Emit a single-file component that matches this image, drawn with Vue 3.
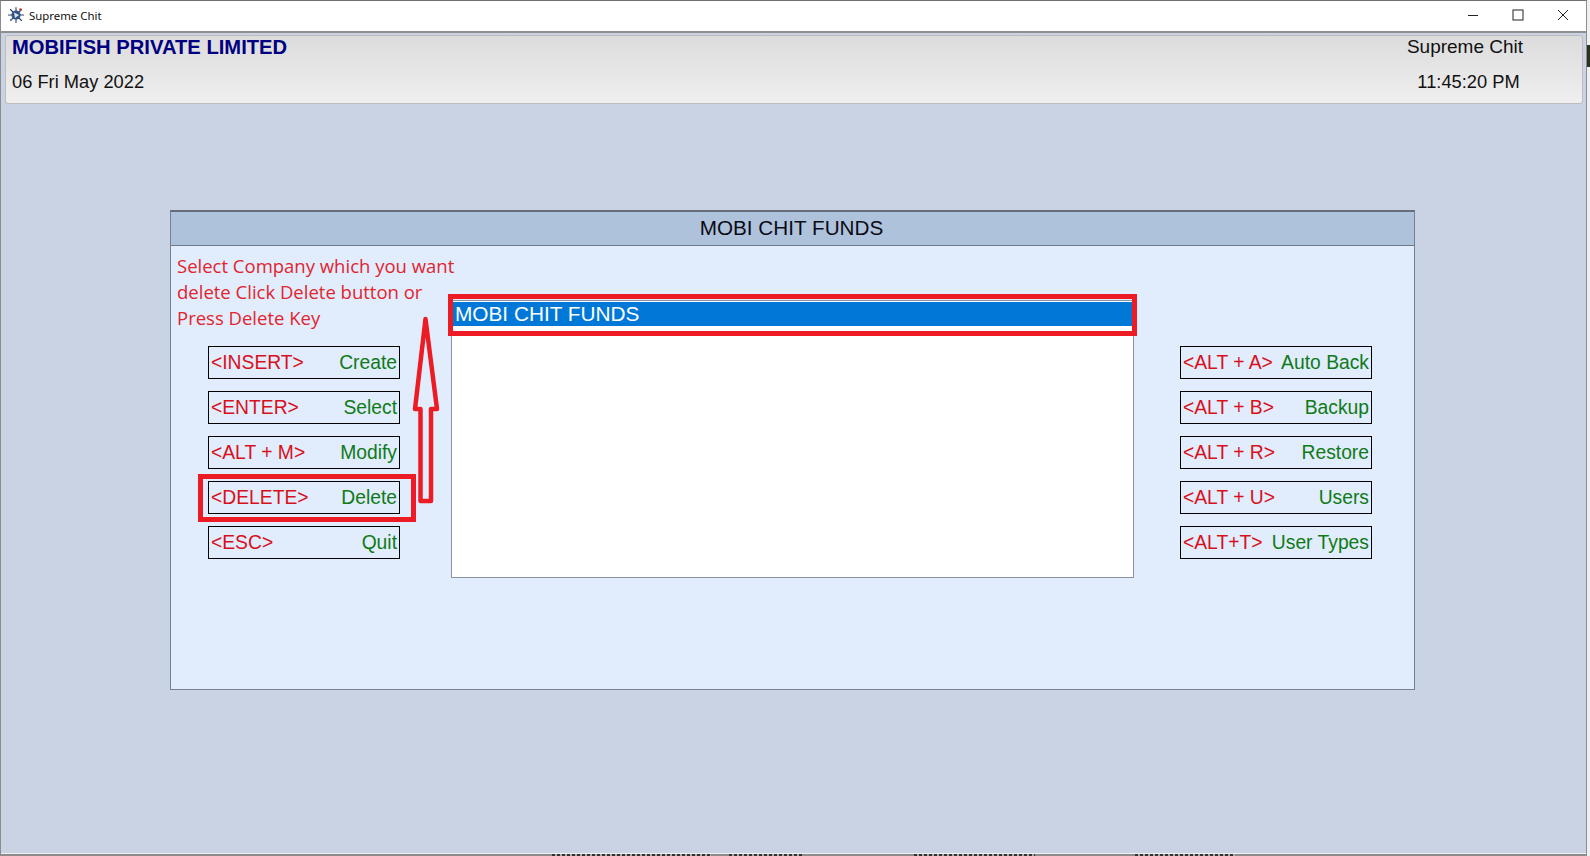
<script setup>
const leftKeys = [
  { key: '<INSERT>', label: 'Create' },
  { key: '<ENTER>', label: 'Select' },
  { key: '<ALT + M>', label: 'Modify' },
  { key: '<DELETE>', label: 'Delete', marked: true },
  { key: '<ESC>', label: 'Quit' },
]
const rightKeys = [
  { key: '<ALT + A>', label: 'Auto Back' },
  { key: '<ALT + B>', label: 'Backup' },
  { key: '<ALT + R>', label: 'Restore' },
  { key: '<ALT + U>', label: 'Users' },
  { key: '<ALT+T>', label: 'User Types' },
]
</script>

<template>
  <div class="page">
    <div class="window">
      <div class="titlebar">
        <svg class="app-icon" width="18" height="18" viewBox="0 0 18 18">
          <g stroke="#2b3f63" stroke-width="1.1" stroke-linecap="round">
            <path d="M9 1.5V16.5M1.5 9H16.5M3.5 3.5L14.5 14.5M14.5 3.5L3.5 14.5" />
          </g>
          <circle cx="9" cy="9" r="4.6" fill="#33528a" />
          <path d="M7 6.5L12 9L8 12Z" fill="#dfe6f2" />
          <circle cx="13.5" cy="3.5" r="1.3" fill="#c0392b" />
          <circle cx="4" cy="14" r="1.1" fill="#5b84c4" />
        </svg>
        <span class="app-name">Supreme Chit</span>
        <div class="controls">
          <span class="control">
            <svg width="12" height="12" viewBox="0 0 12 12"><path d="M1 6.5H11" stroke="#222" fill="none" /></svg>
          </span>
          <span class="control">
            <svg width="12" height="12" viewBox="0 0 12 12"><rect x="1" y="1" width="10" height="10" stroke="#222" fill="none" /></svg>
          </span>
          <span class="control">
            <svg width="12" height="12" viewBox="0 0 12 12"><path d="M1 1L11 11M11 1L1 11" stroke="#222" fill="none" /></svg>
          </span>
        </div>
      </div>

      <main class="main">
        <header class="topbar">
          <div class="topbar-left">
            <div class="company">MOBIFISH PRIVATE LIMITED</div>
            <div class="topbar-line">06 Fri May 2022</div>
          </div>
          <div class="topbar-right">
            <div class="product">Supreme Chit</div>
            <div class="topbar-line time">11:45:20 PM</div>
          </div>
        </header>

        <section class="panel">
          <div class="panel-title">MOBI CHIT FUNDS</div>
          <div class="panel-body">
            <div class="left-col">
              <p class="note">Select Company which you want<br />delete Click Delete button or<br />Press Delete Key</p>
              <div class="keys">
                <div v-for="item in leftKeys" :key="item.key" class="key-row">
                  <span class="key">{{ item.key }}</span>
                  <span class="label">{{ item.label }}</span>
                  <span v-if="item.marked" class="mark-delete"></span>
                </div>
              </div>
            </div>

            <div class="list">
              <div class="list-item">MOBI CHIT FUNDS</div>
              <span class="mark-list"></span>
            </div>

            <div class="keys right-col">
              <div v-for="item in rightKeys" :key="item.key" class="key-row">
                <span class="key">{{ item.key }}</span>
                <span class="label">{{ item.label }}</span>
              </div>
            </div>

            <svg class="arrow" width="32" height="190" viewBox="0 0 32 190">
              <path
                d="M15.5 4L5 94H10.5V186H21V94H27L15.5 4Z"
                fill="none"
                stroke="#ed1c24"
                stroke-width="4.5"
                stroke-linejoin="round"
              />
            </svg>
          </div>
        </section>
      </main>

      <div class="footer">
        <span class="scrap scrap-a"></span>
        <span class="scrap scrap-b"></span>
        <span class="scrap scrap-c"></span>
        <span class="scrap scrap-d"></span>
      </div>
    </div>
    <div class="edge"><span class="edge-dark"></span></div>
  </div>
</template>

<style>
html, body { margin: 0; background: #fff; overflow: hidden; }
</style>

<style scoped>
.page {
  display: flex;
  width: 1590px;
  height: 856px;
  overflow: hidden;
  font-family: "Liberation Sans", Arial, sans-serif;
}
.window {
  flex: 1;
  min-width: 0;
  display: flex;
  flex-direction: column;
  border-top: 1px solid #6f6f6f;
  border-right: 1px solid #8c8c8c;
  border-left: 1px solid #8c8c8c;
  background: #fff;
}
.titlebar {
  flex: none;
  box-sizing: border-box;
  height: 30px;
  display: flex;
  align-items: center;
  padding: 0 0 2px 6px;
}
.app-icon { flex: none; }
.app-name {
  margin-left: 4px;
  font: 11.4px "Noto Sans", "Open Sans", sans-serif;
  color: #111;
}
.controls { margin-left: auto; display: flex; padding-right: 1px; }
.control {
  width: 45px;
  height: 28px;
  display: flex;
  align-items: center;
  justify-content: center;
}
.main {
  flex: 1;
  min-height: 0;
  border-top: 2px solid #8f8f8f;
  padding: 2px 3px 0 4px;
  background: #c9d3e3;
}
.topbar {
  box-sizing: border-box;
  height: 69px;
  display: flex;
  justify-content: space-between;
  border: 1px solid #bdbdbd;
  border-radius: 3px;
  background: linear-gradient(#dcdcdc, #efefef);
  color: #111;
}
.topbar-left { padding-left: 6px; }
.topbar-right { width: 160px; margin-right: 36px; text-align: center; }
.company,
.product {
  height: 24px;
  line-height: 22px;
}
.company {
  font-size: 20.2px;
  font-weight: 700;
  color: #000080;
}
.product { font-size: 19px; padding-right: 2px; }
.topbar-line {
  margin-top: 10px;
  font-size: 18.3px;
  line-height: 24px;
}
.time { padding-left: 5px; }
.panel {
  box-sizing: border-box;
  width: 1245px;
  height: 480px;
  margin: 106px 0 0 165px;
  display: flex;
  flex-direction: column;
  border: 1px solid #76808f;
  border-top: 2px solid #666c78;
  background: #e1ecfc;
}
.panel-title {
  flex: none;
  height: 33px;
  line-height: 32px;
  padding-right: 2px;
  text-align: center;
  font-size: 20.7px;
  color: #0a0a14;
  background: #aec2dc;
  border-bottom: 1px solid #6d7a8c;
}
.panel-body {
  position: relative;
  flex: 1;
  display: flex;
  align-items: flex-start;
}
.left-col {
  flex: none;
  width: 260px;
  padding-left: 6px;
}
.note {
  margin: 7px 0 15px;
  font: 18.5px/26px "Open Sans", "Noto Sans", sans-serif;
  color: #e2242e;
  white-space: nowrap;
}
.keys {
  display: flex;
  flex-direction: column;
  gap: 12px;
}
.left-col .keys { margin-left: 31px; }
.right-col { flex: none; margin: 100px 0 0 46px; }
.key-row {
  position: relative;
  box-sizing: border-box;
  width: 192px;
  height: 33px;
  display: flex;
  align-items: center;
  justify-content: space-between;
  padding: 0 2px;
  border: 1px solid #000;
  font-size: 19.3px;
  white-space: nowrap;
}
.key { color: #d8101c; }
.label { color: #0f7a18; }
.list {
  position: relative;
  flex: none;
  box-sizing: border-box;
  width: 683px;
  height: 278px;
  margin: 54px 0 0 14px;
  padding-top: 1px;
  background: #fff;
  border: 1px solid #8a93a3;
}
.list-item {
  height: 24px;
  line-height: 24px;
  padding-left: 3px;
  font-size: 20.8px;
  color: #fff;
  background: #0078d7;
}
.mark-list,
.mark-delete {
  position: absolute;
  box-sizing: border-box;
  border: 5px solid #ed1c24;
}
.mark-list { left: -4px; right: -4px; top: -7px; height: 42px; }
.mark-delete { left: -11px; right: -17px; top: -8px; bottom: -9px; }
.arrow {
  position: absolute;
  left: 239px;
  top: 69px;
}
.footer {
  flex: none;
  position: relative;
  height: 3px;
  background: linear-gradient(#f1f1f1 0 1px, #8c8c8c 1px);
}
.scrap {
  position: absolute;
  top: 1px;
  height: 2px;
  background: repeating-linear-gradient(90deg, #333 0 3px, #aaa 3px 5px);
}
.scrap-a { left: 551px; width: 159px; }
.scrap-b { left: 728px; width: 73px; }
.scrap-c { left: 913px; width: 121px; }
.scrap-d { left: 1134px; width: 100px; }
.edge {
  flex: none;
  width: 3px;
  background: #f0f0f0;
}
.edge-dark {
  display: block;
  height: 22px;
  margin-top: 45px;
  background: #2b3320;
}
</style>
